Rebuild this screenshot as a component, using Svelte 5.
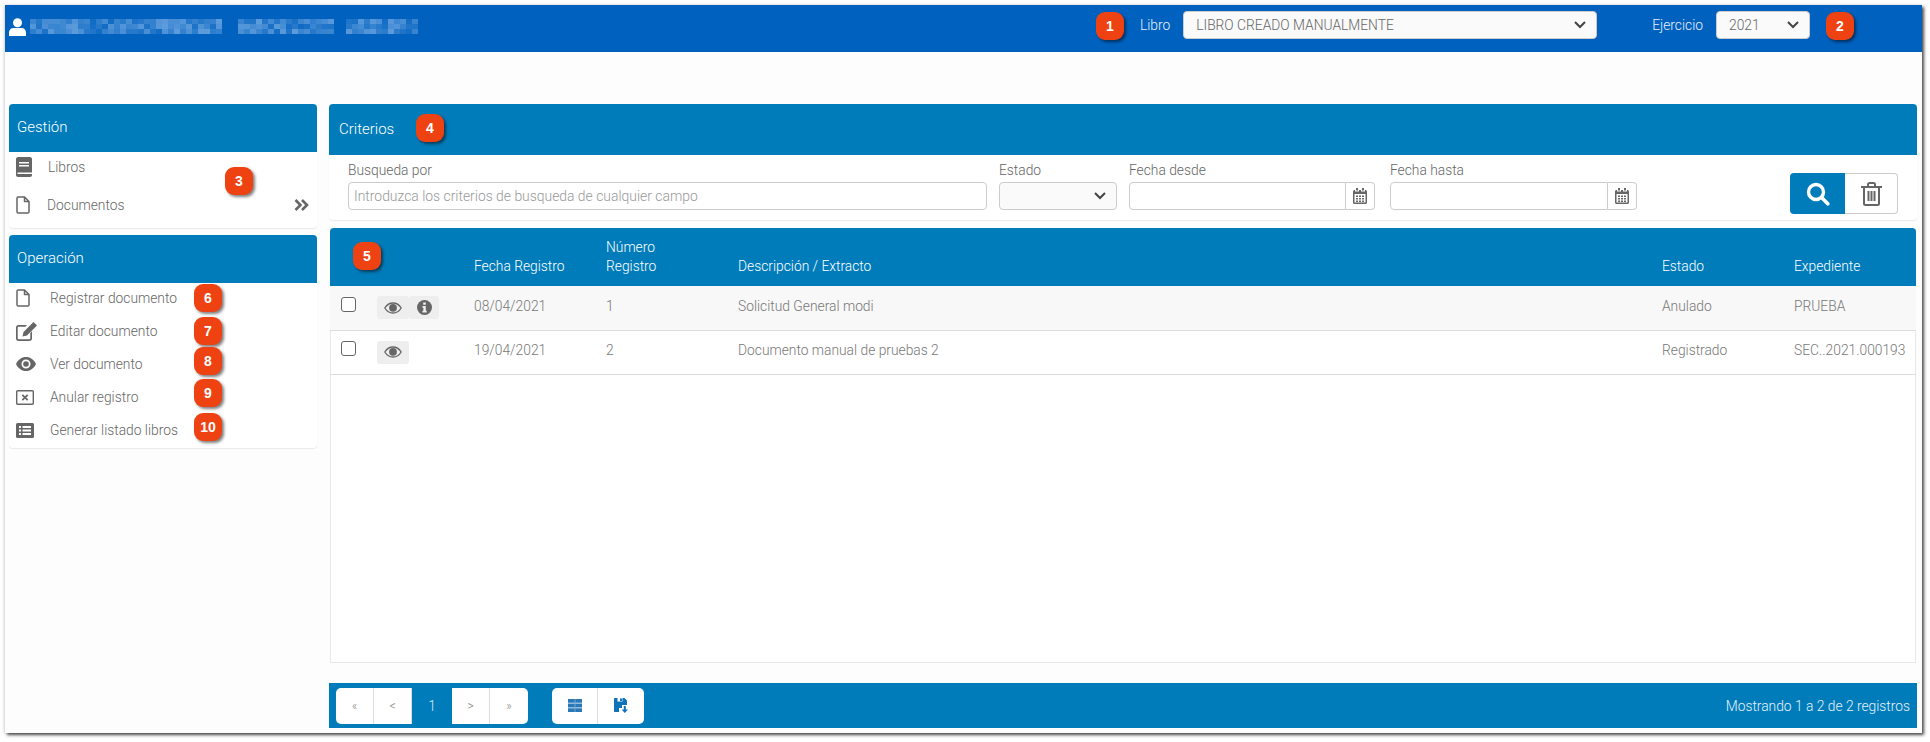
<script lang="ts">
	const mosaic = (n: number, seed: number) =>
		Array.from({ length: n }, (_, i) => {
			const v = (Math.sin(i * 12.9898 + seed) * 43758.5453) % 1;
			return 0.1 + Math.abs(v) * 0.5;
		});
	const blurred = [
		{ cells: mosaic(99, 1), w: 196 },
		{ cells: mosaic(48, 2), w: 96 },
		{ cells: mosaic(36, 3), w: 72 }
	];

	const rows = [
		{ fecha: "08/04/2021", num: "1", desc: "Solicitud General modi", estado: "Anulado", exp: "PRUEBA", info: true },
		{ fecha: "19/04/2021", num: "2", desc: "Documento manual de pruebas 2", estado: "Registrado", exp: "SEC..2021.000193", info: false }
	];
</script>

{#snippet eye()}
	<svg width="18" height="12" viewBox="0 0 18 12"><path fill="none" stroke="currentColor" stroke-width="1.300" d="M.8 6C2.800 2.700 5.600 1 9 1s6.200 1.700 8.200 5c-2 3.300-4.800 5-8.200 5S2.800 9.300.8 6z"/><circle cx="9" cy="5.800" r="3.900" fill="currentColor"/></svg>
{/snippet}

{#snippet file()}
	<svg width="14" height="18" viewBox="0 0 14 18"><path fill="none" stroke="currentColor" stroke-width="1.500" stroke-linejoin="round" d="M1 2.200C1 1.500 1.500 1 2.200 1H8.500L13 5.500V15.800C13 16.500 12.500 17 11.800 17H2.200C1.500 17 1 16.500 1 15.800zM8.500 1V5.500H13"/></svg>
{/snippet}

{#snippet calendar()}
	<svg width="14" height="16" viewBox="0 0 14 16"><path fill="currentColor" d="M3 0h2v2.500H3zM9 0h2v2.500H9zM0 3.500C0 2.700.7 2 1.500 2H2v1.500h4V2h2v1.500h4V2h.5c.8 0 1.500.7 1.500 1.500v11c0 .8-.7 1.500-1.500 1.500h-11C.7 16 0 15.300 0 14.500zM1.500 6v8.500h11V6z"/><path fill="currentColor" d="M3 7.500h2v1.500H3zM6 7.500h2v1.500H6zM9 7.500h2v1.500H9zM3 10h2v1.500H3zM6 10h2v1.500H6zM9 10h2v1.500H9zM3 12.500h2V14H3zM6 12.500h2V14H6zM9 12.500h2V14H9z"/></svg>
{/snippet}

<div class="page">
<div class="frame">
	<header class="topbar">
		<div class="user">
			<svg class="user-icon" width="17" height="18" viewBox="0 0 17 18"><circle cx="8.500" cy="4.800" r="4.500" fill="#fff"/><path fill="#fff" d="M0 18v-3.500C0 12 2 10 4.500 10h8c2.500 0 4.500 2 4.500 4.500V18z"/></svg>
			{#each blurred as part}
				<div class="mosaic" style="width: {part.w}px" aria-hidden="true">
					{#each part.cells as c}
						<i style="opacity: {c}"></i>
					{/each}
				</div>
			{/each}
		</div>
		<div class="selectors">
			<label class="top-field libro">
				<span>Libro</span>
				<select><option>LIBRO CREADO MANUALMENTE</option></select>
			</label>
			<label class="top-field ejercicio">
				<span>Ejercicio</span>
				<select><option>2021</option></select>
			</label>
		</div>
	</header>

	<div class="content">
		<aside class="sidebar">
			<section class="menu-card">
				<h2>Gestión</h2>
				<ul class="menu gestion">
					<li>
						<svg width="16" height="20" viewBox="0 0 16 20"><path fill="currentColor" d="M2 0h12c1 0 2 1 2 2v16c0 1-1 2-2 2H2c-1 0-2-1-2-2V2C0 1 1 0 2 0z"/><path fill="#fff" d="M3 5h10v1.500H3zM3 8h10v1.500H3zM1.500 15.500H16V17H1.500z"/></svg>
						<span class="libros">Libros</span>
					</li>
					<li>
						{@render file()}
						<span>Documentos</span>
						<svg class="more" width="15" height="12" viewBox="0 0 15 12"><path fill="none" stroke="currentColor" stroke-width="2.600" d="M1.500 1l5 5-5 5M8 1l5 5-5 5"/></svg>
					</li>
				</ul>
			</section>
			<section class="menu-card">
				<h2>Operación</h2>
				<ul class="menu operacion">
					<li>
						{@render file()}
						<span>Registrar documento</span>
					</li>
					<li>
						<svg width="21" height="19" viewBox="0 0 21 19"><path fill="currentColor" d="M2.500 3H11L9.300 4.700H2.800c-.6 0-1.100.5-1.100 1.100v10.400c0 .6.500 1.100 1.100 1.100h10.400c.6 0 1.100-.5 1.100-1.100V11L16 9.300v7.200c0 1.400-1.100 2.500-2.500 2.500h-11C1.100 19 0 17.900 0 16.500v-11C0 4.100 1.100 3 2.500 3z"/><path fill="currentColor" d="M17.500 0L21 3.500 11 13.500l-4.500 1 1-4.500z"/></svg>
						<span>Editar documento</span>
					</li>
					<li>
						<svg width="20" height="14" viewBox="0 0 20 14"><path fill="currentColor" fill-rule="evenodd" d="M10 0C5.500 0 2 2.700 0 7c2 4.300 5.500 7 10 7s8-2.700 10-7c-2-4.300-5.500-7-10-7zm0 11.500A4.500 4.500 0 1 1 10 2.500a4.500 4.500 0 0 1 0 9z"/><circle cx="10" cy="7" r="2.800" fill="currentColor"/></svg>
						<span>Ver documento</span>
					</li>
					<li>
						<svg width="18" height="15" viewBox="0 0 18 15"><rect x=".7" y=".7" width="16.600" height="13.600" rx="1" fill="none" stroke="currentColor" stroke-width="1.400"/><path stroke="currentColor" stroke-width="1.700" d="M6.300 4.800l5.400 5.400M11.700 4.800l-5.400 5.400"/></svg>
						<span>Anular registro</span>
					</li>
					<li>
						<svg width="18" height="15" viewBox="0 0 18 15"><rect width="18" height="15" rx="1.500" fill="currentColor"/><path fill="#fff" d="M3 3h2v2H3zM3 6.500h2v2H3zM3 10h2v2H3zM6.500 3H15v2H6.500zM6.500 6.500H15v2H6.500zM6.500 10H15v2H6.500z"/></svg>
						<span>Generar listado libros</span>
					</li>
				</ul>
			</section>
		</aside>

		<main class="main">
			<section class="criteria">
				<h2>Criterios</h2>
				<div class="filters">
					<label class="field busqueda">
						<span>Busqueda por</span>
						<input type="text" placeholder="Introduzca los criterios de busqueda de cualquier campo" />
					</label>
					<label class="field estado">
						<span>Estado</span>
						<select><option></option></select>
					</label>
					<div class="field fecha">
						<span>Fecha desde</span>
						<div class="date-input"><input type="text" /><i>{@render calendar()}</i></div>
					</div>
					<div class="field fecha">
						<span>Fecha hasta</span>
						<div class="date-input"><input type="text" /><i>{@render calendar()}</i></div>
					</div>
					<div class="actions">
						<button class="search" aria-label="Buscar">
							<svg width="24" height="24" viewBox="0 0 24 24"><circle cx="10" cy="10" r="7.500" fill="none" stroke="#fff" stroke-width="3.400"/><path stroke="#fff" stroke-width="3.600" stroke-linecap="round" d="M15.800 15.800l6 6"/></svg>
						</button>
						<button class="clear" aria-label="Limpiar">
							<svg width="21" height="24" viewBox="0 0 21 24"><path fill="none" stroke="currentColor" stroke-width="2" d="M3 6v15.500c0 .9.600 1.500 1.500 1.500h12c.9 0 1.500-.6 1.500-1.500V6M0 5h21M7 5V2.500C7 1.600 7.600 1 8.500 1h4c.9 0 1.500.6 1.500 1.500V5"/><path stroke="currentColor" stroke-width="2" d="M7.500 9v10M10.500 9v10M13.500 9v10"/></svg>
						</button>
					</div>
				</div>
			</section>

			<section class="results">
				<table>
					<colgroup>
						<col style="width: 47px" />
						<col style="width: 97px" />
						<col style="width: 132px" />
						<col style="width: 132px" />
						<col style="width: 924px" />
						<col style="width: 132px" />
						<col />
					</colgroup>
					<thead>
						<tr>
							<th></th>
							<th></th>
							<th>Fecha Registro</th>
							<th>Número<br />Registro</th>
							<th>Descripción / Extracto</th>
							<th>Estado</th>
							<th>Expediente</th>
						</tr>
					</thead>
					<tbody>
						{#each rows as row}
							<tr>
								<td><span class="check"></span></td>
								<td>
									<div class="row-actions">
										<span class="row-btn">{@render eye()}</span>
										{#if row.info}
											<span class="row-btn info">
												<svg width="15" height="15" viewBox="0 0 15 15"><circle cx="7.500" cy="7.500" r="7.500" fill="currentColor"/><path fill="#f0f0f0" d="M6.200 2.500h2.600v2.200H6.200zM5.500 6h3.300v4.800h.9v1.700H5.500v-1.700h.9V7.700h-.9z"/></svg>
											</span>
										{/if}
									</div>
								</td>
								<td>{row.fecha}</td>
								<td>{row.num}</td>
								<td>{row.desc}</td>
								<td>{row.estado}</td>
								<td>{row.exp}</td>
							</tr>
						{/each}
					</tbody>
				</table>
			</section>

			<footer class="pager">
				<div class="page-group">
					<button class="muted">«</button>
					<button class="muted">&lt;</button>
					<span class="current">1</span>
					<button class="muted">&gt;</button>
					<button class="muted">»</button>
				</div>
				<div class="page-tools">
					<button aria-label="Tabla">
						<svg width="14" height="13" viewBox="0 0 14 13"><path fill="#2a78b8" d="M0 0h14v3.800H0zM0 4.600h14v3.800H0zM0 9.200h14V13H0z"/><path fill="#7fb0d6" d="M6.600 0h.8v13h-.8z"/></svg>
					</button>
					<button aria-label="Exportar">
						<svg width="15" height="15" viewBox="0 0 15 15"><path fill="#1173b7" d="M0 1C0 .4.400 0 1 0h9.500L13 2.500V7H8v3H5v4H1c-.6 0-1-.4-1-1z"/><path fill="#fff" d="M3.500 0h5v3.500h-5z"/><path fill="#1173b7" d="M6 .5h2v2.500H6zM9.800 8h2v3.500H14L10.800 15l-3.200-3.500h2.200z"/></svg>
					</button>
				</div>
				<span class="count">Mostrando 1 a 2 de 2 registros</span>
			</footer>
		</main>
	</div>

	<span class="badge" style="left: 1091px; top: 7px">1</span>
	<span class="badge" style="left: 1821px; top: 7px">2</span>
	<span class="badge" style="left: 220px; top: 162px">3</span>
	<span class="badge" style="left: 411px; top: 109px">4</span>
	<span class="badge" style="left: 348px; top: 237px">5</span>
	<span class="badge" style="left: 189px; top: 279px">6</span>
	<span class="badge" style="left: 189px; top: 312px">7</span>
	<span class="badge" style="left: 189px; top: 342px">8</span>
	<span class="badge" style="left: 189px; top: 374px">9</span>
	<span class="badge" style="left: 189px; top: 408px">10</span>
</div>
</div>

<style>
	:global(body) {
		margin: 0;
		background: #fff;
	}

	.page {
		box-sizing: border-box;
		height: 742px;
		padding: 5px 0 0 5px;
	}

	.frame {
		position: relative;
		box-sizing: border-box;
		width: 1917px;
		height: 728px;
		background: #fdfdfd;
		box-shadow: 2px 2px 3px rgba(0, 0, 0, 0.7), -1px 0 3px rgba(0, 0, 0, 0.15);
		font-family: Roboto, "Liberation Sans", sans-serif;
		font-size: 13.800px;
		font-weight: 300;
		color: #666;
	}

	.topbar {
		display: flex;
		justify-content: space-between;
		height: 47px;
		background: #0061bf;
		color: #fff;
	}

	.user {
		display: flex;
		align-items: center;
		padding-left: 4px;
	}

	.user-icon {
		margin: 0 4px 4px 0;
	}

	.mosaic {
		display: flex;
		flex-wrap: wrap;
		height: 15px;
		margin: 0 12px 5px 0;
		overflow: hidden;
		filter: blur(0.6px);
	}

	.mosaic i {
		width: 6px;
		height: 5px;
		background: #9cc4f0;
	}

	.selectors {
		display: flex;
		align-items: flex-start;
		padding: 6px 112px 0 0;
		color: #e8f1fa;
	}

	.top-field {
		display: flex;
		align-items: center;
	}

	.top-field span {
		margin-right: 13px;
	}

	.libro {
		margin-right: 55px;
	}

	select {
		appearance: none;
		box-sizing: border-box;
		height: 28px;
		padding: 0 12px;
		border: 1px solid #ccc;
		border-radius: 4px;
		background-color: #fafafa;
		background-image: url("data:image/svg+xml,%3Csvg xmlns='http://www.w3.org/2000/svg' width='12' height='8'%3E%3Cpath fill='none' stroke='%23444' stroke-width='2' d='M1 1l5 5 5-5'/%3E%3C/svg%3E");
		background-repeat: no-repeat;
		background-position: right 10px center;
		font: inherit;
		color: #666;
	}

	.libro select {
		width: 414px;
	}

	.ejercicio select {
		width: 94px;
	}

	.content {
		display: flex;
		padding-top: 52px;
	}

	.sidebar {
		width: 308px;
		margin-left: 4px;
		margin-right: 12px;
	}

	h2 {
		margin: 0;
		background: #007cba;
		color: #fff;
		font-size: 15px;
		font-weight: 300;
		border-radius: 4px 4px 0 0;
	}

	.menu-card {
		margin-bottom: 7px;
		background: #fff;
		border-radius: 4px;
		box-shadow: 0 1px 1px rgba(0, 0, 0, 0.08);
	}

	.menu-card h2 {
		height: 48px;
		line-height: 46px;
		padding-left: 8px;
	}

	.menu {
		list-style: none;
		margin: 0;
		padding: 0 0 0 7px;
	}

	.gestion {
		height: 76px;
	}

	.gestion li {
		display: flex;
		align-items: center;
		height: 46px;
	}

	.gestion li:first-child {
		height: 30px;
	}

	.gestion li span {
		margin-left: 17px;
	}

	.gestion li .libros {
		margin-left: 16px;
	}

	.more {
		margin-left: auto;
		margin-right: 8px;
	}

	.operacion {
		height: 165px;
	}

	.operacion li {
		display: grid;
		grid-template-columns: 34px auto;
		align-items: center;
		box-sizing: border-box;
		height: 33px;
		padding-bottom: 3px;
	}

	.main {
		width: 1588px;
	}

	.criteria {
		height: 116px;
		margin-bottom: 8px;
		background: #fff;
		border-radius: 4px;
		box-shadow: 0 1px 1px rgba(0, 0, 0, 0.08);
	}

	.criteria h2 {
		height: 51px;
		line-height: 50px;
		padding-left: 10px;
	}

	.filters {
		display: flex;
		align-items: flex-start;
		padding-left: 19px;
		height: 65px;
	}

	.field {
		display: flex;
		flex-direction: column;
		padding-top: 6px;
	}

	.field span {
		height: 21px;
		line-height: 18px;
		color: #666;
	}

	.busqueda {
		width: 639px;
		margin-right: 12px;
	}

	input {
		box-sizing: border-box;
		height: 28px;
		padding: 0 5px;
		border: 1px solid #ccc;
		border-radius: 4px;
		background: #fff;
		font: inherit;
		font-size: 13.900px;
	}

	input::placeholder {
		color: #999;
		opacity: 1;
	}

	.estado {
		width: 118px;
		margin-right: 12px;
	}

	.estado select {
		width: 100%;
	}

	.fecha {
		width: 246px;
		margin-right: 15px;
	}

	.fecha + .fecha {
		width: 247px;
	}

	.date-input {
		display: flex;
	}

	.date-input input {
		flex: 1;
		min-width: 0;
		border-radius: 4px 0 0 4px;
	}

	.date-input i {
		display: flex;
		align-items: center;
		justify-content: center;
		width: 29px;
		box-sizing: border-box;
		border: 1px solid #ccc;
		border-left: none;
		border-radius: 0 4px 4px 0;
		color: #666;
	}

	.actions {
		display: flex;
		margin: 18px 0 0 138px;
	}

	.actions button {
		display: flex;
		align-items: center;
		justify-content: center;
		height: 41px;
		padding: 0;
		box-sizing: border-box;
	}

	.search {
		width: 55px;
		background: #007cba;
		border: none;
		border-radius: 4px 0 0 4px;
	}

	.clear {
		width: 53px;
		background: #fff;
		color: #666;
		border: 1px solid #ccc;
		border-left: none;
		border-radius: 0 4px 4px 0;
	}

	.results {
		height: 435px;
		margin: 0 1px 20px;
		background: #fff;
		border-bottom: 1px solid #e8e8e8;
		border-right: 1px solid #e8e8e8;
		border-left: 1px solid #e8e8e8;
		box-sizing: border-box;
	}

	table {
		width: 1586px;
		margin-left: -1px;
		border-collapse: collapse;
		table-layout: fixed;
	}

	thead tr {
		height: 58px;
		background: #007cba;
	}

	th:first-child {
		border-top-left-radius: 4px;
	}

	th:last-child {
		border-top-right-radius: 4px;
	}

	th {
		vertical-align: bottom;
		padding: 0 0 10px;
		text-align: left;
		font-weight: 300;
		line-height: 19px;
		color: #fff;
	}

	tbody tr {
		height: 44px;
		border-bottom: 1px solid #ddd;
	}

	tbody tr:nth-child(odd) {
		background: #f8f8f8;
	}

	td {
		padding: 0 0 4px;
		color: #777;
		white-space: nowrap;
	}

	.check {
		display: block;
		box-sizing: border-box;
		width: 15px;
		height: 15px;
		margin: 0 0 3px 11px;
		background: #fff;
		border: 1px solid #666;
		border-radius: 3px;
	}

	.row-actions {
		display: flex;
		margin-top: 4px;
	}

	.row-btn {
		display: flex;
		align-items: center;
		justify-content: center;
		width: 32px;
		height: 23px;
		background: #eee;
		border-radius: 3px;
		color: #666;
	}

	.row-btn.info {
		width: 30px;
	}

	.pager {
		display: flex;
		align-items: center;
		box-sizing: border-box;
		height: 45px;
		padding: 0 7px;
		background: #007cba;
		color: #fff;
	}

	.pager button {
		display: flex;
		align-items: center;
		justify-content: center;
		height: 36px;
		padding: 0;
		background: #fff;
		border: none;
		border-right: 1px solid #ddd;
		font: inherit;
		color: #888;
	}

	.page-group {
		display: flex;
		align-items: center;
	}

	.page-group button {
		width: 38px;
		font-size: 12px;
	}

	.page-group button:first-child {
		border-radius: 5px 0 0 5px;
	}

	.page-group button:last-child {
		border-right: none;
		border-radius: 0 5px 5px 0;
	}

	.current {
		width: 40px;
		text-align: center;
		color: #d6ebf6;
	}

	.page-tools {
		display: flex;
		margin-left: 24px;
	}

	.page-tools button {
		width: 46px;
	}

	.page-tools button:first-child {
		border-radius: 5px 0 0 5px;
	}

	.page-tools button:last-child {
		border-right: none;
		border-radius: 0 5px 5px 0;
	}

	.count {
		margin-left: auto;
		color: #e6f2f9;
	}

	.badge {
		position: absolute;
		display: flex;
		align-items: center;
		justify-content: center;
		width: 28px;
		height: 28px;
		background: #ef4212;
		border-radius: 9px;
		box-shadow: 2px 2px 3px rgba(0, 0, 0, 0.5);
		font-family: "Liberation Sans", sans-serif;
		font-size: 14px;
		font-weight: 700;
		color: #fff;
	}
</style>
